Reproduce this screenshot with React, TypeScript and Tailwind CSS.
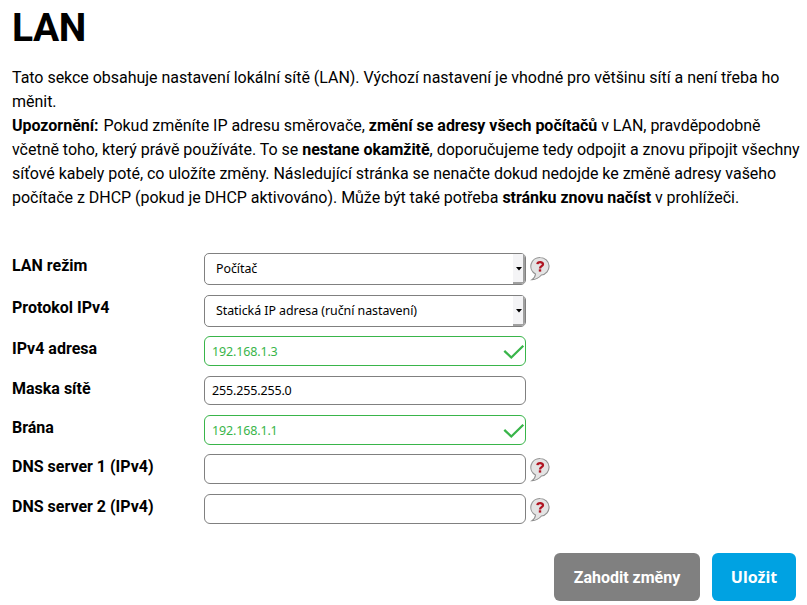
import React from "react";

function HelpIcon() {
  return (
    <svg className="ml-1 mt-[3px] shrink-0" width="21" height="26" viewBox="0 0 21 26">
      <path
        d="M10.2 1.5a9 8.8 0 0 1 1.2 17.5C9 21.8 6.2 23.6 2 23.7c2.2-1.4 3.2-3.1 3.5-5.7A9 8.8 0 0 1 10.2 1.5Z"
        fill="#e4e4e4"
        stroke="#909090"
        strokeWidth="1.1"
      />
      <path d="M7.4 8.2C7.6 5.6 13 5.5 13 8.2c0 2-3 1.9-3 4.2" fill="none" stroke="#b01522" strokeWidth="2.3" />
      <rect x="8.8" y="13.3" width="2.4" height="2.3" fill="#b01522" />
    </svg>
  );
}

function Check() {
  return (
    <svg className="mt-[2px] shrink-0" width="22" height="16" viewBox="0 0 22 16">
      <path d="M1.3 6.8 8.3 13.5 20.3 1.8" fill="none" stroke="#39b54a" strokeWidth="2.3" />
    </svg>
  );
}

function Select({ children }: { children: React.ReactNode }) {
  return (
    <div className="flex h-8 w-[322px] items-center justify-between overflow-hidden rounded-[5px] border border-[#808080] pl-[11px] text-[12.4px] tracking-[-0.04px] text-black">
      <span className="pt-px">{children}</span>
      <span className="flex h-full w-3 items-center justify-end border-r-2 border-b-2 border-[#a0a0a0] bg-[#f4f4f6]">
        <svg width="8" height="4" viewBox="0 0 8 4" className="mt-0.5 shrink-0">
          <path d="M1 0h6L4 3.5Z" fill="#000" />
        </svg>
      </span>
    </div>
  );
}

function Input({ value = "", valid = false, short = false }: { value?: string; valid?: boolean; short?: boolean }) {
  return (
    <div
      className={`flex w-[322px] items-center justify-between rounded-[6px] border pl-[7px] text-[12.5px] tracking-[-0.15px] ${
        short ? "h-[29px]" : "h-[30px]"
      } ${valid ? "border-[#39b54a] text-[#39b54a]" : "border-[#808080] text-black"}`}
    >
      <span className={valid ? "pt-0.5" : "pt-px"}>{value}</span>
      {valid && <Check />}
    </div>
  );
}

function Row({ label, height, help = false, children }: { label: string; height: string; help?: boolean; children: React.ReactNode }) {
  return (
    <div className={`flex items-start ${height}`}>
      <label className="w-48 shrink-0 pt-px text-base leading-6 font-bold">{label}</label>
      <div className="flex items-start font-['Noto_Sans',sans-serif]">
        {children}
        {help && <HelpIcon />}
      </div>
    </div>
  );
}

export default function App() {
  return (
    <main className="h-[605px] w-[807px] overflow-hidden bg-white pl-3 font-['Roboto',sans-serif] text-black">
      <h1 className="pt-1 text-[39px] leading-[48px] font-bold tracking-[-0.4px]">LAN</h1>
      <div className="mt-[14px] text-base leading-6 tracking-[-0.027px] whitespace-nowrap">
        <p>
          Tato sekce obsahuje nastavení lokální sítě (LAN). Výchozí nastavení je vhodné pro většinu sítí a není třeba ho
          <br />
          měnit.
        </p>
        <p>
          <b className="mr-px">Upozornění:</b> Pokud změníte IP adresu směrovače, <b>změní se adresy všech počítačů</b> v LAN, pravděpodobně
          <br />
          včetně toho, který právě používáte. To se <b>nestane okamžitě</b>, doporučujeme tedy odpojit a znovu připojit všechny
          <br />
          síťové kabely poté, co uložíte změny. Následující stránka se nenačte dokud nedojde ke změně adresy vašeho
          <br />
          počítače z DHCP (pokud je DHCP aktivováno). Může být také potřeba <b>stránku znovu načíst</b> v prohlížeči.
        </p>
      </div>
      <form className="mt-[43px]">
        <Row label="LAN režim" height="h-[42px]" help><Select>Počítač</Select></Row>
        <Row label="Protokol IPv4" height="h-[41px]"><Select>Statická IP adresa (ruční nastavení)</Select></Row>
        <Row label="IPv4 adresa" height="h-10"><Input value="192.168.1.3" valid /></Row>
        <Row label="Maska sítě" height="h-[39px]"><Input value="255.255.255.0" short /></Row>
        <Row label="Brána" height="h-[39px]"><Input value="192.168.1.1" valid /></Row>
        <Row label="DNS server 1 (IPv4)" height="h-10" help><Input /></Row>
        <Row label="DNS server 2 (IPv4)" height="h-10" help><Input /></Row>
        <div className="mt-[19px] flex justify-end gap-3 pr-[11px]">
          <button type="button" className="h-12 w-[146px] rounded-[6px] bg-[#808080] pt-0.5 text-base font-bold text-white">Zahodit změny</button>
          <button type="button" className="h-12 w-[84px] rounded-[6px] bg-[#00a2e2] font-['Noto_Sans',sans-serif] text-base font-bold text-white">Uložit</button>
        </div>
      </form>
    </main>
  );
}
